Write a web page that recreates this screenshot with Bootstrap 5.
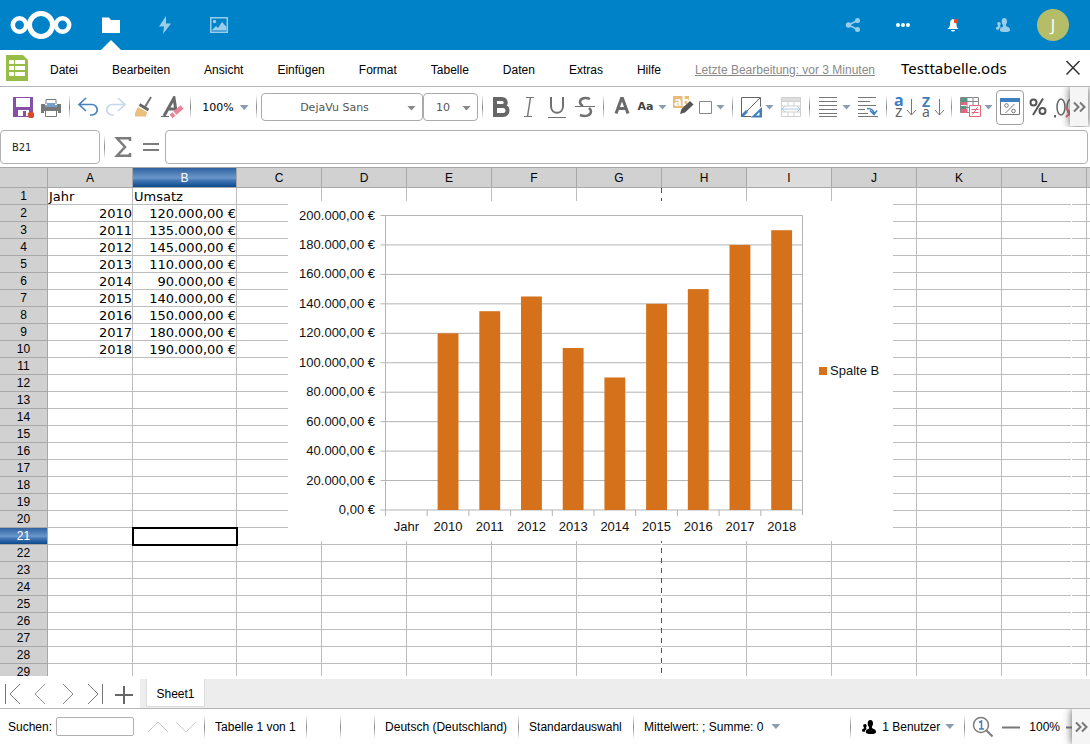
<!DOCTYPE html>
<html lang="de">
<head>
<meta charset="utf-8">
<meta name="viewport" content="width=device-width, initial-scale=1">
<title>Testtabelle.ods</title>
<link href="https://cdn.jsdelivr.net/npm/bootstrap@5.3.0/dist/css/bootstrap.min.css" rel="stylesheet">
<style>
body { font: 12px/16px "Liberation Sans", Arial, sans-serif; color: #000; background: #fff; }
svg { display: block; flex: none; }
.bare { border: 0; background: none; padding: 0; color: inherit; display: flex; align-items: center; justify-content: center; flex: none; }
input { border: 1px solid #b0b0b0; border-radius: 4px; background: #fff; color: #222; }

.top-bar { height: 50px; background: #0082c9; color: #fff; padding-left: 10px; padding-right: 12px; }
.app-link { width: 54px; height: 50px; position: relative; }
.app-link.current::after { content: ""; position: absolute; bottom: 0; left: 17px; border: 10px solid transparent; border-top: 0; border-bottom-color: #fff; }
.logo-link { width: 74px; height: 50px; display: flex; align-items: center; }
.top-btn { width: 50px; height: 50px; }
.dim { opacity: .6; }
.avatar { width: 32px; height: 32px; border-radius: 50%; background: #b6bd69; font: 16px/32px "Noto Sans", sans-serif; text-align: center; }

.menu-bar { height: 37px; border-bottom: 1px solid #b6b6b6; padding-left: 6px; padding-right: 9px; }
.menu-bar .main-menu { gap: 34px; margin-left: 22px; padding-top: 4px; }
.main-menu a { color: #000; text-decoration: none; white-space: nowrap; }
.main-menu .last-edit { color: #8a8a8a; text-decoration: underline; }
.doc-title { font: 15px/20px "Noto Sans", sans-serif; margin-left: 26px; }

.tool-bar { height: 40px; padding-left: 9px; position: relative; overflow: hidden; }
.tool { width: 28px; height: 35px; }
.tool.with-menu { width: 40px; justify-content: flex-start; padding-left: 3px; gap: 3px; }
.tool.slim { width: 34px; }
.tool.slimmer { width: 30px; }
.tool.active { border: 1px solid #a0a0a0; border-radius: 4px; }
.case-label { width: 19px; color: #444; font: bold 11px/16px "DejaVu Sans", sans-serif; }
.glyph { font-family: "Noto Sans", sans-serif; }
.divider { width: 9px; height: 24px; flex: none; background: linear-gradient(#fff, #888 50%, #fff) center / 1px 100% no-repeat; }
.caret { width: 9px; height: 5px; flex: none; background: #8b9bb0; clip-path: polygon(0 0, 100% 0, 50% 100%); }
.caret.grey { background: #888; }
.zoom-pick { width: 57px; height: 28px; gap: 6px; padding-left: 4px; padding-top: 1px; font: 11px/16px "DejaVu Sans", sans-serif; }
.combo { height: 28px; border: 1px solid #aaa; border-radius: 4px; color: #555; font: 11px/16px "DejaVu Sans", sans-serif; padding: 2px 6px 0 0; }
.combo span:first-child { flex: 1; text-align: center; }
.combo.font-name { width: 162px; }
.combo.font-size { width: 55px; }
.more-btn { position: absolute; top: 0; right: 2px; width: 18px; height: 39px; background: #f5f5f5; box-shadow: 0 0 8px #555; }

.formula-bar { height: 40px; padding: 3px 2px 3px 0; }
.cell-name { width: 100px; height: 34px; padding: 0 11px; font: 11px/16px "DejaVu Sans Condensed", "DejaVu Sans", sans-serif; }
.formula { height: 34px; }

.sheet-area { min-height: 0; position: relative; overflow: hidden; border-top: 1px solid #a8a8a8; }
.grid { table-layout: fixed; border-collapse: separate; border-spacing: 0; }
.grid th { background: #d1d1d1; font-weight: 400; text-align: center; padding: 0; border-right: 1px solid #a8a8a8; border-bottom: 1px solid #a8a8a8; line-height: 16px; }
.grid thead th { height: 20px; padding-top: 2px; line-height: 17px; }
.grid thead th.hover { background: #dcdcdc; }
.grid td { height: 17px; padding: 2px 1px 0; border-right: 1px solid #bdbdbd; border-bottom: 1px solid #bdbdbd; font: 13px/14px "DejaVu Sans", sans-serif; white-space: nowrap; }
.grid td:nth-child(8) { border-right-color: transparent; }
.grid .num { text-align: right; padding-right: 0; }
.grid th.picked { color: #fff; background: linear-gradient(#3061a0, #6b98cb 52%, #4377b5 65%, #0c4a8c); }
.grid td.cursor { outline: 2px solid #000; outline-offset: -1px; }
.page-break { position: absolute; top: 20px; bottom: 3px; left: 661px; width: 1px; background: repeating-linear-gradient(#555 0 5px, #fff 5px 10px); }
.seam { position: absolute; top: 20px; bottom: 0; right: 18px; width: 1px; background: #fff; }
.chart-box { position: absolute; left: 288px; top: 33px; width: 605px; height: 340px; background: #fff; }
.chart-box text { font: 13px "Liberation Sans", Arial, sans-serif; fill: #111; }

.tab-bar { height: 29px; background: #ededed; margin-top: 3px; }
.tab-tools { background: #fff; width: 140px; }
.tab-tools button { width: 28px; padding-right: 4px; }
.sheet-tab { width: 59px; height: 28px; margin-left: 6px; background: #fff; border: 1px solid #ddd; border-top: 0; padding-top: 2px; }

.status-bar { height: 36px; border-top: 1px solid #b6b6b6; position: relative; overflow: hidden; padding-left: 8px; white-space: nowrap; }
.find-box { width: 78px; height: 19px; border-radius: 2px; margin-left: 4px; margin-right: 10px; }
.status-bar .find-btn { width: 28px; }
.stat { flex: none; padding: 0 6px; }
.user-count { gap: 5px; }
.status-end { padding-right: 18px; }
.status-more { position: absolute; top: 0; right: 0; width: 18px; height: 35px; background: #f5f5f5; box-shadow: 0 0 8px #555; }
</style>
</head>
<body class="vh-100 d-flex flex-column overflow-hidden">

<svg class="d-none">
  <symbol id="people" viewBox="0 0 16 16"><path d="M9.300 1C11.200 1 12 2.500 12 4.200 12 6 11.300 7 10.900 7.800 10.800 9 11 9.300 12.800 10 14.600 10.700 15 11.500 15 13 15 14.500 13.500 15 10 15 6.500 15 4.800 14.500 4.800 13 4.800 11.500 5.500 10.700 7.300 10 8.200 9.600 8.100 8.800 7.900 7.900 7.200 7 6.700 6 6.700 4.200 6.700 2.500 7.500 1 9.300 1zM4 5C5.300 5 5.800 6 5.700 7 5.700 7.800 5.200 8.300 5 8.800 5 9.400 5.300 9.600 6 9.900 4.700 10.500 4 11.300 3.900 12.700 1.500 12.700 1 12.200 1 11.400 1 10.400 1.500 10.100 2.800 9.600 3.300 9.400 3.200 9 3.100 8.700 2.500 8.200 2.200 7.700 2.200 6.800 2.200 5.700 2.800 5 4 5z"/></symbol>
  <symbol id="raquo" viewBox="0 0 14 12"><path d="M2 1.500 6.500 6 2 10.500M8 1.500 12.500 6 8 10.500" fill="none" stroke="#777" stroke-width="2"/></symbol>
</svg>

<header class="top-bar d-flex align-items-center flex-shrink-0">
  <a href="#" class="logo-link" aria-label="Startseite">
    <svg width="62" height="30" fill="none" stroke="#fff"><circle cx="31" cy="15" r="11.500" stroke-width="5"/><circle cx="9.500" cy="15" r="6.700" stroke-width="4.500"/><circle cx="52.500" cy="15" r="6.700" stroke-width="4.500"/></svg>
  </a>
  <a href="#" class="bare app-link current" aria-label="Dateien"><svg width="20" height="20" fill="#fff"><path d="M1 2.500h7l2 2.500h9v13H1z"/></svg></a>
  <a href="#" class="bare app-link dim" aria-label="Aktivität"><svg width="14" height="20" fill="#fff"><path d="M8 1 1 11.500h5L5 19l8-10.500H8z"/></svg></a>
  <a href="#" class="bare app-link dim" aria-label="Galerie"><svg width="20" height="20"><path fill="none" stroke="#fff" stroke-width="1.500" d="M1.800 2.800h16.500v14.500H1.800z"/><circle cx="5.500" cy="6.500" r="1.700" fill="#fff"/><path fill="#fff" d="m3 15 4-4 2 2 4-6 4.500 5v3.500H3z"/></svg></a>
  <div class="ms-auto d-flex align-items-center">
    <button class="bare top-btn dim" aria-label="Teilen"><svg width="16" height="16" viewBox="0 0 16 16" fill="#fff"><circle cx="3.500" cy="8" r="2.700"/><circle cx="12.500" cy="3.500" r="2.500"/><circle cx="12.500" cy="12.500" r="2.500"/><path d="m12.500 3.500-9 4.500 9 4.500" fill="none" stroke="#fff" stroke-width="1.500"/></svg></button>
    <button class="bare top-btn" aria-label="Mehr"><svg width="16" height="16" fill="#fff"><circle cx="3" cy="8" r="2"/><circle cx="8" cy="8" r="2"/><circle cx="13" cy="8" r="2"/></svg></button>
    <button class="bare top-btn" aria-label="Benachrichtigungen"><svg width="14" height="16"><path fill="#fff" d="M7 2C4.500 2.500 4 4.500 4 7c0 2.500-1 3.500-2.500 5h11C11 10.500 10.500 9.500 10.500 7 10 4 9 2.500 7 2zM5 13a2 1.500 0 0 0 4 0z"/><circle cx="10" cy="4" r="2.200" fill="#f0441c"/></svg></button>
    <button class="bare top-btn dim" aria-label="Kontakte"><svg width="16" height="16" fill="#fff"><use href="#people"/></svg></button>
    <button class="bare top-btn"><span class="avatar">J</span></button>
  </div>
</header>

<nav class="menu-bar d-flex align-items-center flex-shrink-0">
  <svg width="22" height="26"><path fill="#97bc47" d="M0 0h17l5 5v21H0z"/><path fill="#fff" d="M3 5h5v4H3zM9 5h10v4H9zM3 11h5v4H3zM9 11h10v4H9zM3 17h5v4H3zM9 17h10v4H9z"/></svg>
  <div class="main-menu d-flex">
    <a href="#">Datei</a><a href="#">Bearbeiten</a><a href="#">Ansicht</a><a href="#">Einfügen</a><a href="#">Format</a><a href="#">Tabelle</a><a href="#">Daten</a><a href="#">Extras</a><a href="#">Hilfe</a>
    <a href="#" class="last-edit">Letzte Bearbeitung: vor 3 Minuten</a>
  </div>
  <div class="doc-title">Testtabelle.ods</div>
  <button class="bare ms-auto" aria-label="Schließen"><svg width="16" height="16" stroke="#333" stroke-width="1.500"><path d="m1.500 1 13 13.500M14.500 1l-13 13.500"/></svg></button>
</nav>

<div class="tool-bar d-flex align-items-center flex-shrink-0" role="toolbar">
  <button class="bare tool" aria-label="Speichern"><svg width="22" height="22"><path fill="#8550a6" d="M1 1h20v20H1z"/><path fill="#fff" d="M4 2h14v9H4zM6 14h11v6h-3v-5h-3v5H6z"/><circle cx="19" cy="19" r="3.300" fill="#d9492c"/></svg></button>
  <button class="bare tool" aria-label="Drucken"><svg width="22" height="22"><path fill="#787878" d="M1 8h4v3h12V8h4v9h-3v-2H4v2H1z"/><path fill="none" stroke="#787878" d="M6 8V3.500h10V8M5.500 15v5.500h11V15"/><path stroke="#4a83bd" stroke-width="1.500" d="M5 10h12M7 8h8"/></svg></button>
  <span class="divider"></span>
  <button class="bare tool" aria-label="Rückgängig"><svg width="22" height="22" fill="none" stroke="#4a83bd" stroke-width="1.700"><path d="M9 2 2 8.500 9 15M2 8.500h13a5 5 0 0 1 0 10.500h-2"/></svg></button>
  <button class="bare tool" aria-label="Wiederherstellen"><svg width="22" height="22" fill="none" stroke="#c6d8ea" stroke-width="1.700"><path d="m13 2 7 6.500-7 6.500M20 8.500H7A5 5 0 0 0 7 19h2"/></svg></button>
  <button class="bare tool" aria-label="Format übertragen"><svg width="22" height="22"><path stroke="#777" stroke-width="2" d="m18 1-6 10"/><path stroke="#666" stroke-width="3" d="m6.500 8.500 9 5.500"/><path fill="#e8c07c" d="m5 11 9 5c0 2-1 4-1 4.500H2C1.500 18 3 14 5 11z"/></svg></button>
  <button class="bare tool" aria-label="Formatierung löschen"><svg width="24" height="22"><path fill="none" stroke="#6a6a6a" stroke-width="3" d="m4 20 10-18 2 13M8 13h8"/><path stroke="#6a6a6a" d="M1 20.500h8"/><path stroke="#ea8298" stroke-width="4.500" d="m11 20.500 3-2.500m1-1 7-6"/></svg></button>
  <span class="divider"></span>
  <button class="bare zoom-pick">100% <span class="caret"></span></button>
  <span class="divider"></span>
  <button class="bare combo font-name" aria-label="Schriftart"><span>DejaVu Sans</span><span class="caret grey"></span></button>
  <button class="bare combo font-size" aria-label="Schriftgröße"><span>10</span><span class="caret grey"></span></button>
  <span class="divider"></span>
  <button class="bare tool" aria-label="Fett"><svg width="22" height="22" fill="none" stroke="#666" stroke-width="4"><path d="M5 3h7c5 0 5 7 0 7H5M5 10h8c6 0 6 9 0 9H5M5 1v20"/></svg></button>
  <button class="bare tool" aria-label="Kursiv"><svg width="22" height="22" fill="none" stroke="#777"><path d="M8 1.500h8M6 20.500h8"/><path stroke-width="1.500" d="m12.500 1.500-3 19"/></svg></button>
  <button class="bare tool" aria-label="Unterstrichen"><svg width="22" height="22" fill="none" stroke="#707070"><path stroke-width="2" d="M5 1v9c0 9 12 9 12 0V1"/><path d="M2 21.500h18"/></svg></button>
  <button class="bare tool" aria-label="Durchgestrichen"><svg width="22" height="22" fill="none" stroke="#707070"><path stroke-width="2.500" d="M16 3c-4-2-10-1-10 3 0 2 1 3 3 4M6 19c5 2 11 1 11-4 0-1-1-2-2-3"/><path d="M1 10.500h20"/></svg></button>
  <span class="divider"></span>
  <button class="bare tool" aria-label="Schriftfarbe"><svg width="22" height="22" fill="none" stroke="#6a6a6a" stroke-width="3"><path d="m5 17.500 5.500-15h1l5.500 15M7 12.500h8"/></svg></button>
  <button class="bare tool with-menu slim px-0" aria-label="Groß-/Kleinschreibung"><span class="case-label">Aa</span><span class="caret"></span></button>
  <button class="bare tool" aria-label="Hervorheben"><svg width="24" height="22"><path fill="#e8bd7a" d="M1 0h16v12H1z"/><text class="glyph" x="2" y="10" font-size="13" font-weight="700" fill="#fff">ab</text><path fill="#555" d="m8 18 1.500-5L18 5l3.500 3.500L13 16.500z"/></svg></button>
  <button class="bare tool with-menu slimmer px-0" aria-label="Hintergrundfarbe"><svg width="15" height="22"><path fill="none" stroke="#888" d="M1.500 5.500h12v12h-12z"/></svg><span class="caret"></span></button>
  <span class="divider"></span>
  <button class="bare tool with-menu" aria-label="Rahmen"><svg width="22" height="22"><path fill="none" stroke="#666" d="M1.500 1.500h19v19h-19zM2 20 20 2"/><path fill="#fff" d="m22 9-11 12h11z"/><path fill="#3f7fbf" d="M22 11v10.500H11zM1 21v-2l5-5 2 2-5 5z"/><path fill="#fff" d="M19.500 16v3.500H16z"/></svg><span class="caret"></span></button>
  <button class="bare tool" aria-label="Zellen verbinden"><svg width="22" height="22" fill="none" stroke="#d0d0d0"><path fill="#ddd" d="M1.500 1.500h19v4h-19z"/><path d="M1.500 1.500v19h19v-19M8 5v5m6-5v5M1.500 10h19M1.500 16h19M8 16v4m6-4v4"/><path stroke="#a8cbe8" d="M2 13h18M5 10l-3 3 3 3m12-6 3 3-3 3"/></svg></button>
  <span class="divider"></span>
  <button class="bare tool with-menu" aria-label="Ausrichtung"><svg width="22" height="22" stroke="#777"><path d="M2 1.500h18M2 5.500h18M2 9.500h18M2 13.500h18M2 17.500h18M2 20.500h18"/></svg><span class="caret"></span></button>
  <button class="bare tool" aria-label="Zeilenumbruch"><svg width="22" height="22" fill="none" stroke="#777"><path d="M1 1.500h18M1 5.500h12M1 9.500h18M1 13.500h7M1 17.500h10M1 20.500h20"/><path stroke="#3f7fbf" stroke-width="1.500" d="M10 12.500c4 0 7 1 7 6m-4-4 4 4 3-4"/></svg></button>
  <span class="divider"></span>
  <button class="bare tool" aria-label="Aufsteigend sortieren"><svg width="24" height="22" fill="none"><text class="glyph" x="1" y="10" font-size="16" font-weight="700" fill="#3f7fbf">a</text><text class="glyph" x="2" y="21" font-size="16" fill="#666">z</text><path stroke="#777" d="M18.500 3v16m-4.500-5 4.500 5 4.500-5"/></svg></button>
  <button class="bare tool" aria-label="Absteigend sortieren"><svg width="24" height="22" fill="none"><text class="glyph" x="1" y="11" font-size="14" font-weight="700" fill="#3f7fbf">Z</text><text class="glyph" x="1" y="21" font-size="14" fill="#666">a</text><path stroke="#777" d="M18.500 3v16m-4.500-5 4.500 5 4.500-5"/></svg></button>
  <span class="divider"></span>
  <button class="bare tool with-menu" aria-label="Bedingte Formatierung"><svg width="22" height="22"><path fill="none" stroke="#888" d="M1.500 1.500h18v15h-18zM1 5.500h19M1 11.500h18M8 1v16M14 1v10"/><path fill="#4f9a80" d="M2 2h6v4H2zM2 10h5v3H2z"/><path fill="#e2657d" d="M2 6h6v3H2zM2 13h6v4H2z"/><path fill="#fff" stroke="#e2657d" d="M10.500 9.500h11v11h-11z"/><path stroke="#e2657d" d="M12.500 13.500h7m-7 3h7m-1-5-5 7"/></svg><span class="caret"></span></button>
  <button class="bare tool active" aria-label="Zahlenformat"><svg width="22" height="22" fill="none" stroke="#777"><path d="M1.500 2.500h19v16h-19z"/><path fill="#3f7fbf" stroke="none" d="M1 2h20v4H1z"/><path d="m15.500 8-9 9"/><circle cx="7.500" cy="9.500" r="1.800"/><circle cx="14.500" cy="15" r="1.800"/></svg></button>
  <button class="bare tool" aria-label="Prozent"><svg width="22" height="22" fill="none" stroke="#555" stroke-width="2"><path d="M16 2.500 6 19"/><circle cx="6.500" cy="6.500" r="3"/><circle cx="15.500" cy="15" r="3"/></svg></button>
  <button class="bare tool" aria-label="Dezimalstelle löschen"><svg width="26" height="22" fill="none" stroke="#666" stroke-width="2"><path d="M2 19v2.500"/><ellipse cx="8" cy="11" rx="4" ry="8" stroke-width="1.500"/><ellipse cx="18" cy="11" rx="4" ry="8" stroke-width="1.500"/><path stroke="#e2657d" d="m13 12 9 9m0-9-9 9"/></svg></button>
  <button class="bare more-btn" aria-label="Weitere Werkzeuge"><svg width="14" height="12"><use href="#raquo"/></svg></button>
</div>

<div class="formula-bar d-flex align-items-center flex-shrink-0">
  <input class="cell-name flex-shrink-0" value="B21" aria-label="Zellbezug">
  <span class="divider"></span>
  <button class="bare tool" aria-label="Summe"><svg width="22" height="22" fill="none" stroke="#7c7c7c" stroke-width="2.500"><path d="M18 5V2.300H5l8 8.700-8 8.700h13V17"/></svg></button>
  <button class="bare tool" aria-label="Funktion"><svg width="18" height="22" stroke="#7c7c7c" stroke-width="2"><path d="M1 8h16M1 14h16"/></svg></button>
  <input class="formula flex-fill" aria-label="Formel">
</div>

<main class="sheet-area flex-fill">
  <table class="grid">
    <colgroup id="cols"></colgroup>
    <thead><tr id="letters"></tr></thead>
    <tbody id="rows"></tbody>
  </table>
  <div class="page-break"></div>
  <div class="seam"></div>
  <div class="chart-box"><svg id="chart" width="605" height="340" role="img" aria-label="Umsatz je Jahr"></svg></div>
</main>

<div class="tab-bar d-flex flex-shrink-0">
  <div class="tab-tools d-flex">
    <button class="bare" aria-label="Erste Tabelle"><svg width="18" height="22" fill="none" stroke="#777"><path d="M2.500 1v20M17 1 7 11l10 10"/></svg></button>
    <button class="bare" aria-label="Vorherige Tabelle"><svg width="18" height="22" fill="none" stroke="#999"><path d="M14 1 4 11l10 10"/></svg></button>
    <button class="bare" aria-label="Nächste Tabelle"><svg width="18" height="22" fill="none" stroke="#888"><path d="m4 1 10 10L4 21"/></svg></button>
    <button class="bare" aria-label="Letzte Tabelle"><svg width="18" height="22" fill="none" stroke="#777"><path d="M15.500 1v20M1 1l10 10L1 21"/></svg></button>
    <button class="bare" aria-label="Tabelle einfügen"><svg width="18" height="22" fill="none" stroke="#666" stroke-width="2"><path d="M0 12h18M9 3v18"/></svg></button>
  </div>
  <button class="bare sheet-tab">Sheet1</button>
</div>

<footer class="status-bar d-flex align-items-center flex-shrink-0">
  <label for="find">Suchen:</label>
  <input id="find" class="find-box flex-shrink-0">
  <button class="bare find-btn" aria-label="Vorheriges"><svg width="22" height="22" fill="none" stroke="#ccc"><path d="m1 16 10-10 10 10"/></svg></button>
  <button class="bare find-btn" aria-label="Nächstes"><svg width="22" height="22" fill="none" stroke="#ccc"><path d="M1 6l10 10L21 6"/></svg></button>
  <span class="divider"></span>
  <span class="stat" style="width:93px">Tabelle 1 von 1</span>
  <span class="divider"></span>
  <span class="stat" style="width:25px"></span>
  <span class="divider"></span>
  <span class="stat" style="width:25px"></span>
  <span class="divider"></span>
  <span class="stat" style="width:135px">Deutsch (Deutschland)</span>
  <span class="divider"></span>
  <span class="stat" style="width:106px">Standardauswahl</span>
  <span class="divider"></span>
  <button class="bare stat">Mittelwert: ; Summe: 0 <span class="caret ms-2"></span></button>
  <div class="status-end ms-auto d-flex align-items-center">
    <span class="divider"></span>
    <button class="bare stat user-count"><svg width="16" height="16" fill="#000"><use href="#people"/></svg>1 Benutzer<span class="caret"></span></button>
    <span class="divider"></span>
    <button class="bare tool" aria-label="Zoom zurücksetzen"><svg width="22" height="22" fill="none" stroke="#7c7c7c" stroke-width="2"><circle cx="9" cy="9" r="7.500" stroke-width="1.500"/><path d="m14.500 14.500 6 6"/><path stroke="#3f7fbf" stroke-width="1.500" d="M7 6.500 9.500 5v8M7 13h5"/></svg></button>
    <button class="bare tool" aria-label="Verkleinern"><svg width="18" height="22" stroke="#777" stroke-width="2"><path d="M0 11.500h18"/></svg></button>
    <span class="ps-1 pe-1">100%</span>
    <svg width="8" height="22" stroke="#777" stroke-width="2"><path d="M2 11.500h6"/></svg>
  </div>
  <button class="bare status-more" aria-label="Mehr anzeigen"><svg width="14" height="12"><use href="#raquo"/></svg></button>
</footer>

<script>
const data = [[2010, 120], [2011, 135], [2012, 145], [2013, 110], [2014, 90], [2015, 140], [2016, 150], [2017, 180], [2018, 190]];
const euro = v => (v ? v + '.000' : '0') + ',00 €';
const el = id => document.getElementById(id);

// Columns and rows that fit the window; the last column is cut by its edge and has no letter
const area = document.querySelector('.sheet-area');
const colWidths = { A: 85, B: 104 };
const cursorRow = 21, hoverCol = 'I';
let x0 = 48, cols = '<col style="width:48px">', letters = '<th></th>', count = 0;
while (x0 < area.clientWidth) {
  const name = String.fromCharCode(65 + count), w = colWidths[name] || 85, fits = x0 + w <= area.clientWidth;
  const cls = name === 'B' ? 'picked' : name === hoverCol ? 'hover' : '';
  cols += `<col style="width:${w}px">`;
  letters += `<th class="${cls}">${fits ? name : ''}</th>`;
  x0 += w;
  count++;
}
document.querySelector('.grid').style.width = x0 + 'px';
el('cols').innerHTML = cols;
el('letters').innerHTML = letters;

let html = '';
const rowCount = Math.ceil((area.clientHeight - 20) / 17);
for (let r = 1; r <= rowCount; r++) {
  const d = data[r - 2];
  const a = r === 1 ? '<td>Jahr</td>' : `<td class="num">${d ? d[0] : ''}</td>`;
  const b = r === 1 ? '<td>Umsatz</td>' : `<td class="num${r === cursorRow ? ' cursor' : ''}">${d ? euro(d[1]) : ''}</td>`;
  html += `<tr><th${r === cursorRow ? ' class="picked"' : ''}>${r}</th>${a}${b}${'<td></td>'.repeat(Math.max(0, count - 2))}</tr>`;
}
el('rows').innerHTML = html;

// Bar chart
const left = 97.5, right = 514.5, top0 = 14.5, base = 309, perK = (base - top0) / 200, step = (right - left) / 10;
let g = '';
for (let v = 0; v <= 200; v += 20) {
  const y = base - v * perK;
  g += `<path d="M${left - 5} ${y}H${right}" stroke="#b3b3b3"/><text x="87" y="${Math.round(y) + 4}" text-anchor="end">${euro(v)}</text>`;
}
g += `<path d="M${left} ${top0}V${base + 5}M${right} ${top0}V${base + 5}" stroke="#b3b3b3"/>`;
['Jahr', ...data.map(d => d[0])].forEach((name, i) => {
  const x = left + i * step, h = i ? data[i - 1][1] * perK : 0;
  g += `<path d="M${x} ${base}v6" stroke="#b3b3b3"/>`;
  if (h) g += `<rect x="${x + step / 4}" y="${base - h}" width="${step / 2}" height="${h}" fill="#d4711a"/>`;
  g += `<text x="${x + step / 2}" y="330" text-anchor="middle">${name}</text>`;
});
g += '<rect x="531" y="166" width="8" height="8" fill="#d4711a"/><text x="542" y="174">Spalte B</text>';
el('chart').innerHTML = g;
</script>
<script src="https://cdn.jsdelivr.net/npm/bootstrap@5.3.0/dist/js/bootstrap.bundle.min.js"></script>
</body>
</html>
